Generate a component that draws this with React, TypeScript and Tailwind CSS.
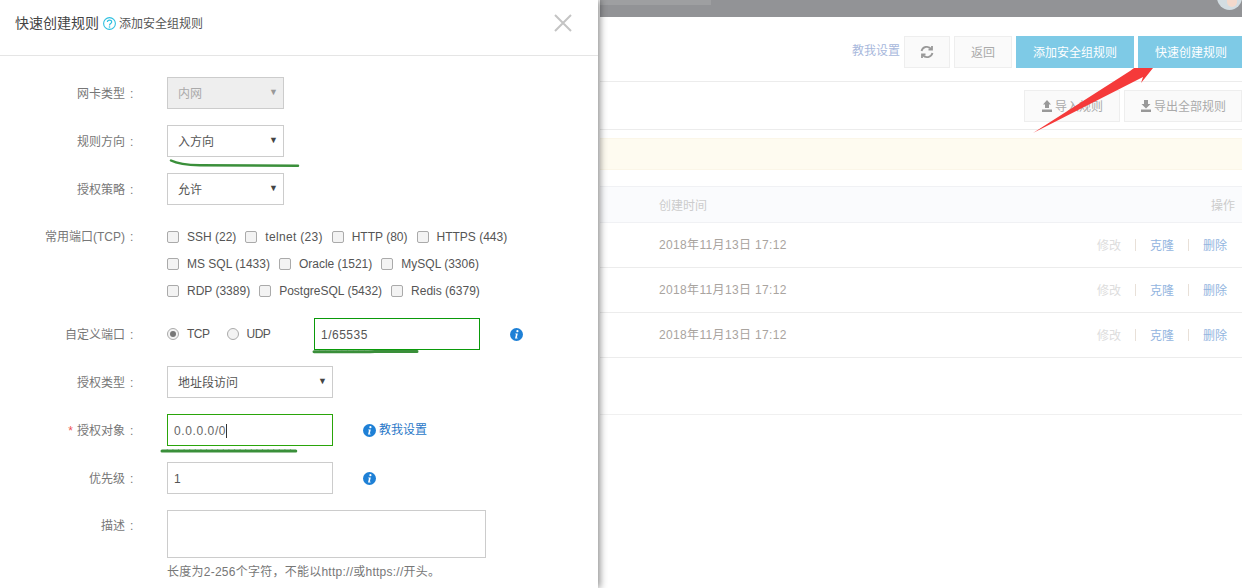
import { ReactNode } from 'react';

const font = "font-['Liberation_Sans','Noto_Sans_CJK_SC',sans-serif]";

function Label({ children, top = 'items-center' }: { children: ReactNode; top?: string }) {
  return (
    <div className={`w-[167px] shrink-0 flex ${top} justify-end pr-[34px] pt-[1px] text-[12px] leading-[18px] text-[#777]`}>
      {children}
      <span className="ml-[5px] w-[3px]">:</span>
    </div>
  );
}

function Select({ value, width = 'w-[117px]', disabled = false }: { value: string; width?: string; disabled?: boolean }) {
  return (
    <div
      className={`${width} h-[32px] border-[1.5px] border-[#ccc] flex items-center justify-between pl-[10px] pr-[5px] text-[12px] ${
        disabled ? 'bg-[#eee] text-[#aaa]' : 'bg-white text-[#555]'
      }`}
    >
      <span className="pt-[1px]">{value}</span>
      <span className={`text-[9px] ${disabled ? 'text-[#999]' : 'text-[#444]'}`}>▼</span>
    </div>
  );
}

function InfoIcon() {
  return (
    <svg width="13" height="13" viewBox="0 0 13 13">
      <circle cx="6.5" cy="6.5" r="6.5" fill="#1e80d6" />
      <circle cx="7.4" cy="3.2" r="1.1" fill="#fff" />
      <path d="M5.4 5.4h2.4l-1 4.4h1l-.3.8H5l1-4.4h-.9z" fill="#fff" />
    </svg>
  );
}

function Check({ label, tracking = '' }: { label: string; tracking?: string }) {
  return (
    <div className="flex items-center">
      <span className="w-[12px] h-[12px] rounded-[2px] border border-[#aaa] bg-[#f3f3f3]" />
      <span className={`ml-[8px] text-[#555] ${tracking}`}>{label}</span>
    </div>
  );
}

function Dialog() {
  return (
    <div className="absolute left-0 top-0 w-[598px] h-[588px] bg-white shadow-[2px_0_7px_rgba(0,0,0,0.45)] overflow-hidden">
      <div className="h-[56px] border-b border-[#e5e5e5] flex items-center justify-between pl-[15px] pr-[26px] pb-[8px]">
        <div className="flex items-center text-[14px] text-[#444]">
          <span>快速创建规则</span>
          <svg className="ml-[4px] mr-[3px]" width="13" height="13" viewBox="0 0 13 13" fill="none">
            <circle cx="6.5" cy="6.5" r="5.9" stroke="#2fc0e0" strokeWidth="1.100" />
            <path d="M4.400 5c0-2.600 4.300-2.600 4.300-.1 0 1.700-2.200 1.700-2.200 3.500" stroke="#2fc0e0" strokeWidth="1.200" />
            <circle cx="6.500" cy="10" r=".8" fill="#2fc0e0" />
          </svg>
          <span className="text-[12px] text-[#555]">添加安全组规则</span>
        </div>
        <svg className="mb-[2px]" width="18" height="18" viewBox="0 0 18 18" stroke="#c4c4c4" strokeWidth="2">
          <path d="M1 1l16 16M17 1L1 17" />
        </svg>
      </div>

      <div className="pt-[21px] flex flex-col">
        <div className="flex items-center h-[32px]">
          <Label>网卡类型</Label>
          <Select value="内网" disabled />
        </div>
        <div className="flex items-center h-[32px] mt-[16px]">
          <Label>规则方向</Label>
          <Select value="入方向" />
        </div>
        <div className="flex items-center h-[32px] mt-[16px]">
          <Label>授权策略</Label>
          <Select value="允许" />
        </div>

        <div className="flex mt-[22px]">
          <Label top="items-start">常用端口(TCP)</Label>
          <div className="flex flex-col gap-[9px] pt-[1px] text-[12px] leading-[18px]">
            <div className="flex gap-[9px]">
              <Check label="SSH (22)" />
              <Check label="telnet (23)" tracking="tracking-[0.3px]" />
              <Check label="HTTP (80)" />
              <Check label="HTTPS (443)" />
            </div>
            <div className="flex gap-[9px]">
              <Check label="MS SQL (1433)" />
              <Check label="Oracle (1521)" />
              <Check label="MySQL (3306)" />
            </div>
            <div className="flex gap-[9px]">
              <Check label="RDP (3389)" />
              <Check label="PostgreSQL (5432)" />
              <Check label="Redis (6379)" />
            </div>
          </div>
        </div>

        <div className="flex items-center h-[32px] mt-[18px]">
          <Label>自定义端口</Label>
          <div className="flex items-center text-[12px] text-[#555] w-[147px]">
            <span className="w-[12px] h-[12px] rounded-full border border-[#aaa] bg-[#f3f3f3] flex items-center justify-center">
              <span className="w-[6px] h-[6px] rounded-full bg-[#777]" />
            </span>
            <span className="ml-[8px] tracking-[-0.5px]">TCP</span>
            <span className="ml-[17px] w-[12px] h-[12px] rounded-full border border-[#aaa] bg-[#f3f3f3]" />
            <span className="ml-[8px] tracking-[-0.5px]">UDP</span>
          </div>
          <div className="w-[166px] h-[32px] border border-[#0a9a0a] flex items-center pl-[6px] pt-[1px] text-[12px] text-[#555] tracking-[0.5px]">
            1/65535
          </div>
          <div className="ml-[30px]">
            <InfoIcon />
          </div>
        </div>

        <div className="flex items-center h-[32px] mt-[16px]">
          <Label>授权类型</Label>
          <Select value="地址段访问" width="w-[166px]" />
        </div>

        <div className="flex items-center h-[32px] mt-[16px]">
          <Label>
            <span className="text-[#e55] mr-[4px]">*</span>授权对象
          </Label>
          <div className="w-[166px] h-[32px] border border-[#2aa50a] flex items-center pl-[6px] pt-[1px] text-[12px] text-[#666] tracking-[0.6px]">
            0.0.0.0/0<span className="w-px h-[14px] bg-[#333]" />
          </div>
          <div className="ml-[30px] flex items-center gap-[3px] text-[12px] text-[#2a78c8]">
            <InfoIcon />
            <span>教我设置</span>
          </div>
        </div>

        <div className="flex items-center h-[32px] mt-[16px]">
          <Label>优先级</Label>
          <div className="w-[166px] h-[32px] border-[1.5px] border-[#ccc] flex items-center pl-[6px] pt-[1px] text-[12px] text-[#555]">1</div>
          <div className="ml-[30px]">
            <InfoIcon />
          </div>
        </div>

        <div className="flex mt-[16px]">
          <div className="w-[167px] shrink-0 flex justify-end pr-[34px] pt-[7px] text-[12px] leading-[18px] text-[#777]">
            描述
            <span className="ml-[5px] w-[3px]">:</span>
          </div>
          <div>
            <div className="w-[319px] h-[48px] border-[1.5px] border-[#ccc]" />
            <div className="mt-[5px] text-[12px] leading-[18px] text-[#777] tracking-[0.25px]">长度为2-256个字符，不能以http://或https://开头。</div>
          </div>
        </div>
      </div>

      {/* green marks drawn over the form */}
      <svg className="absolute left-0 top-0 pointer-events-none" width="598" height="588" fill="none" stroke="#3a8f3a" strokeLinecap="round">
        <path d="M171 160.500C178 164 188 165 200 165.300L298 165.700" strokeWidth="2.500" />
        <path d="M314 351.800L417 351.500" strokeWidth="3" strokeDasharray="5 0.600" />
        <path d="M162 451L296 451" strokeWidth="3" strokeDasharray="5 0.600" />
      </svg>
    </div>
  );
}

function Row() {
  return (
    <div className="h-[45px] border-b border-[#ececec] flex items-center justify-between pl-[59px] pr-[15px] text-[12px] text-[#a9a49f]">
      <span className="tracking-[0.35px]">2018年11月13日 17:12</span>
      <div className="flex items-center gap-[14px]">
        <span className="text-[#ddd] pt-[2px]">修改</span>
        <span className="w-px h-[12px] bg-[#e8e0d8]" />
        <span className="text-[#93b5e0] pt-[2px]">克隆</span>
        <span className="w-px h-[12px] bg-[#e8e0d8]" />
        <span className="text-[#93b5e0] pt-[2px]">删除</span>
      </div>
    </div>
  );
}

function Background() {
  return (
    <div className="ml-[600px] flex flex-col">
      <div className="h-[17px] bg-[#929396] relative overflow-hidden">
        <div className="absolute left-0 top-0 w-[111px] h-[5px] bg-[#9e9fa1]" />
        <div className="absolute left-[617px] top-[-15px] w-[25px] h-[25px] rounded-full bg-[#d3dde2]" />
        <div className="absolute left-[627px] top-[-4px] w-[10px] h-[11px] rounded-full bg-[#f3d9cc]" />
      </div>
      <div className="h-[65px] border-b border-[#ececec] flex items-center justify-end gap-[4px] pt-[6px] text-[12px]">
        <span className="text-[#a8b8dc] pb-[2px]">教我设置</span>
        <span className="w-[46px] h-[32px] border border-[#eee] bg-[#fafafa] flex items-center justify-center text-[#999] text-[16px]">
          <svg width="14" height="14" viewBox="0 0 14 14" fill="none" stroke="#999" strokeWidth="1.800">
            <path d="M1.500 6a5.600 5.600 0 0 1 9.800-2M12.500 8a5.600 5.600 0 0 1-9.800 2" />
            <path d="M12 1v3.500H8.500M2 13V9.500h3.500" />
          </svg>
        </span>
        <span className="w-[58px] h-[32px] border border-[#eee] bg-[#fafafa] flex items-center justify-center pt-[2px] text-[#aaa]">返回</span>
        <span className="w-[118px] h-[32px] bg-[#7ecae6] text-white flex items-center justify-center pt-[2px]">添加安全组规则</span>
        <span className="w-[104px] h-[32px] bg-[#7ecae6] text-white flex items-center justify-center pl-[2px] pt-[2px]">快速创建规则</span>
      </div>
      <div className="h-[48px] border-b border-[#ececec] flex items-center justify-end gap-[4px] pt-[1px] text-[12px] text-[#aaa]">
        <span className="w-[96px] h-[32px] border border-[#eee] bg-[#fafafa] flex items-center justify-center gap-[2px] pt-[2px]">
          <svg className="mb-[2px]" width="12" height="12" viewBox="0 0 12 12" fill="#999"><path d="M6 0l4 4.500H8V8H4V4.500H2zM1 9.500h10V12H1z" /></svg>
          导入规则
        </span>
        <span className="w-[118px] h-[32px] border border-[#eee] bg-[#fafafa] flex items-center justify-center gap-[2px] pt-[2px]">
          <svg className="mb-[2px]" width="12" height="12" viewBox="0 0 12 12" fill="#999"><path d="M4 0h4v4h2.500L6 8.500 1.500 4H4zM1 9.500h10V12H1z" /></svg>
          导出全部规则
        </span>
      </div>
      <div className="h-[32px] mt-[8px] bg-[#fefbf0] border-y border-[#fbf6e8]" />
      <div className="h-[37px] mt-[16px] bg-[#fafbfd] border-y border-[#f0f1f4] flex items-center justify-between pl-[59px] pr-[7px] pt-[2px] text-[12px] text-[#ccc]">
        <span>创建时间</span>
        <span>操作</span>
      </div>
      <Row />
      <Row />
      <Row />
      <div className="h-[57px] border-b border-[#f0f0f0]" />
    </div>
  );
}

function Arrow() {
  return (
    <svg className="absolute left-[1030px] top-[65px]" width="130" height="72" viewBox="0 0 130 72">
      <path d="M3 68L100 6l4-3h19L111 18l2-6z" fill="#f53a3a" />
    </svg>
  );
}

export default function App() {
  return (
    <div className={`relative w-[1242px] h-[588px] bg-white overflow-hidden ${font}`}>
      <Background />
      <Arrow />
      <Dialog />
    </div>
  );
}
